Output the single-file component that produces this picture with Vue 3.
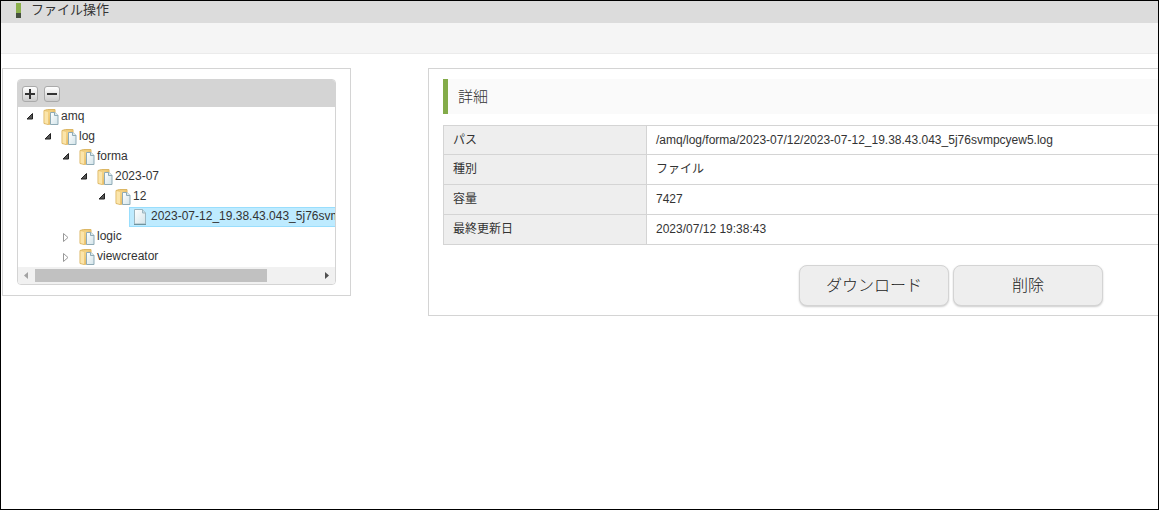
<script setup>
import { ref } from 'vue'

const selected = ref(5)
const nodes = [
  { name: 'amq', depth: 0, open: true },
  { name: 'log', depth: 1, open: true },
  { name: 'forma', depth: 2, open: true },
  { name: '2023-07', depth: 3, open: true },
  { name: '12', depth: 4, open: true },
  { name: '2023-07-12_19.38.43.043_5j76svmpcyew5.log', depth: 5, file: true },
  { name: 'logic', depth: 2, open: false },
  { name: 'viewcreator', depth: 2, open: false },
]
const details = [
  { label: 'パス', value: '/amq/log/forma/2023-07/12/2023-07-12_19.38.43.043_5j76svmpcyew5.log' },
  { label: '種別', value: 'ファイル' },
  { label: '容量', value: '7427' },
  { label: '最終更新日', value: '2023/07/12 19:38:43' },
]
</script>

<template>
  <div class="page">
    <svg class="defs" width="0" height="0" aria-hidden="true">
      <linearGradient id="gold" x1="0" x2="1" y1="0" y2="1">
        <stop offset="0" stop-color="#f9dc92" /><stop offset="1" stop-color="#d9a345" />
      </linearGradient>
      <linearGradient id="sheet" x1="0" x2="1" y1="0" y2="1">
        <stop offset="0" stop-color="#ffffff" /><stop offset="1" stop-color="#d3e4ea" />
      </linearGradient>
    </svg>
    <header class="title-bar">
      <span class="mark"></span>
      <h1>ファイル操作</h1>
    </header>
    <div class="toolbar"></div>
    <main class="content">
      <section class="tree-panel">
        <div class="tree-box">
          <div class="tree-tools">
            <button type="button" aria-label="すべて展開">
              <svg width="10" height="10" viewBox="0 0 10 10"><path d="M5 0v10M0 5h10" stroke="#333" stroke-width="2" /></svg>
            </button>
            <button type="button" aria-label="すべて折りたたむ">
              <svg width="10" height="10" viewBox="0 0 10 10"><path d="M0 5h10" stroke="#333" stroke-width="2" /></svg>
            </button>
          </div>
          <ul class="tree" role="tree">
            <li
              v-for="(node, i) in nodes"
              :key="node.name"
              role="treeitem"
              :class="['d' + node.depth, { file: node.file, selected: selected === i }]"
              @click="selected = i"
            >
              <svg v-if="!node.file" class="twisty" width="8" height="10" viewBox="0 0 8 10">
                <path v-if="node.open" d="M6.500 1.500v5.500H1z" fill="#555" stroke="#222" />
                <path v-else d="M1.500 1.500v8l4.500-4z" fill="#fff" stroke="#999" />
              </svg>
              <span class="node">
                <svg v-if="node.file" width="16" height="16" viewBox="0 0 16 16">
                  <path d="M1.500.5h8l3 3.500v11h-11z" fill="url(#sheet)" stroke="#9db6c0" />
                  <path d="M9.500.5V4h3" fill="#c5dbe3" stroke="#9db6c0" />
                  <path d="M1 15.500h12" stroke="#6f939e" />
                </svg>
                <svg v-else width="16" height="16" viewBox="0 0 16 16">
                  <path d="M1 1.500 4.500.5h7.500v13L5.500 15.500 1 14.500z" fill="#f0cd7c" stroke="#dcb765" />
                  <path d="M5.500 2.500 12 1v12.500L5.500 15.500z" fill="url(#gold)" />
                  <path d="M1.500 2 5 3v12L1.500 14z" fill="#fbe5ab" />
                  <path d="M7.500 3.500h4.500l3 3v9h-7.500z" fill="url(#sheet)" stroke="#8fabb6" />
                  <path d="M11.500 3.500V6.500h3.500" fill="#dbeaf0" stroke="#8fabb6" />
                </svg>
                <span class="name">{{ node.name }}</span>
              </span>
            </li>
          </ul>
          <div class="scrollbar">
            <svg width="17" height="17" viewBox="0 0 17 17"><path d="M10 5v7L6 8.500z" fill="#a3a3a3" /></svg>
            <div class="track"><div class="thumb"></div></div>
            <svg width="17" height="17" viewBox="0 0 17 17"><path d="M7 5v7l4-3.500z" fill="#505050" /></svg>
          </div>
        </div>
      </section>
      <section class="detail-panel">
        <h2>詳細</h2>
        <table>
          <tbody>
            <tr v-for="row in details" :key="row.label">
              <th scope="row">{{ row.label }}</th>
              <td>{{ row.value }}</td>
            </tr>
          </tbody>
        </table>
        <div class="actions">
          <button type="button">ダウンロード</button>
          <button type="button">削除</button>
        </div>
      </section>
    </main>
  </div>
</template>

<style>
body {
  background: #fff;
}
</style>

<style scoped>
.page {
  box-sizing: border-box;
  min-height: 100vh;
  overflow: hidden;
  border: 1px solid #000;
  background: #fff;
  color: #333;
  font: 12px/18px "Liberation Sans", "Noto Sans CJK JP", sans-serif;
}
.defs {
  display: block;
}
.title-bar {
  display: flex;
  align-items: flex-start;
  height: 22px;
  padding-left: 15px;
  background: #dcdcdc;
}
.mark {
  width: 5px;
  height: 10px;
  margin-top: 2px;
  border-bottom: 5px solid #465040;
  background: #8bb04c;
}
h1 {
  margin: 0 0 0 10px;
  font-size: 13px;
  font-weight: 400;
  line-height: 18px;
}
.toolbar {
  height: 30px;
  border-bottom: 1px solid #ebebeb;
  background: #f5f5f5;
}
.content {
  display: flex;
  align-items: flex-start;
  gap: 77px;
  padding: 14px 0 0 1px;
}
.tree-panel {
  box-sizing: border-box;
  flex: 0 0 349px;
  min-width: 0;
  padding: 10px 14px;
  border: 1px solid #d4d4d4;
}
.tree-box {
  overflow: hidden;
  border: 1px solid #d4d4d4;
  border-radius: 4px;
}
.tree-tools {
  box-sizing: border-box;
  display: flex;
  gap: 6px;
  height: 27px;
  padding: 6px 0 0 4px;
  background: #d4d4d4;
}
.tree-tools button {
  display: flex;
  align-items: center;
  justify-content: center;
  width: 16px;
  height: 16px;
  padding: 0;
  border: 1px solid #aaa;
  border-radius: 3px;
  background: linear-gradient(#fff, #ccc);
}
.tree-tools svg {
  flex: none;
}
.tree {
  margin: 0;
  padding: 0;
  list-style: none;
}
.tree li {
  display: flex;
  align-items: center;
  height: 20px;
  white-space: nowrap;
  cursor: pointer;
}
.d0 { padding-left: 8px; }
.d1 { padding-left: 26px; }
.d2 { padding-left: 44px; }
.d3 { padding-left: 62px; }
.d4 { padding-left: 80px; }
.d5 { padding-left: 111px; }
.twisty {
  flex: none;
  margin-right: 8px;
}
.node {
  box-sizing: border-box;
  display: flex;
  flex: 1 0 auto;
  height: 20px;
  padding-top: 1px;
  border: 1px solid transparent;
}
.node svg {
  flex: none;
}
.name {
  margin-left: 2px;
  line-height: 15px;
}
.file .node {
  padding-left: 3px;
}
.selected .node {
  border-color: #99defd;
  background: #beebff;
}
.scrollbar {
  display: flex;
  background: #f1f1f1;
}
.track {
  flex: 1;
  padding: 2px 0;
}
.thumb {
  width: 82%;
  height: 13px;
  background: #c1c1c1;
}
.detail-panel {
  flex: 1 1 0;
  min-width: 0;
  box-sizing: border-box;
  margin-right: -316px;
  padding: 10px 14px 9px;
  border: 1px solid #d4d4d4;
}
h2 {
  margin: 0 0 11px;
  padding-left: 10px;
  border-left: 5px solid #83ab49;
  background: #fafafa;
  font-size: 15px;
  font-weight: 300;
  line-height: 35px;
}
table {
  width: 100%;
  border-collapse: collapse;
  table-layout: fixed;
}
th,
td {
  padding: 5px 9px 6px;
  border: 1px solid #d4d4d4;
  font-weight: 400;
  text-align: left;
}
tr:first-child > * {
  padding-bottom: 5px;
}
th {
  width: 184px;
  background: #eee;
}
.actions {
  display: flex;
  justify-content: center;
  gap: 4px;
  margin-top: 20px;
}
.actions button {
  width: 150px;
  height: 41px;
  padding: 0;
  border: 1px solid #d4d4d4;
  border-radius: 8px;
  background: #eee;
  box-shadow: 0 1px 2px #ccc;
  color: #222;
  font: 300 16px/24px "Liberation Sans", "Noto Sans CJK JP", sans-serif;
}
</style>
